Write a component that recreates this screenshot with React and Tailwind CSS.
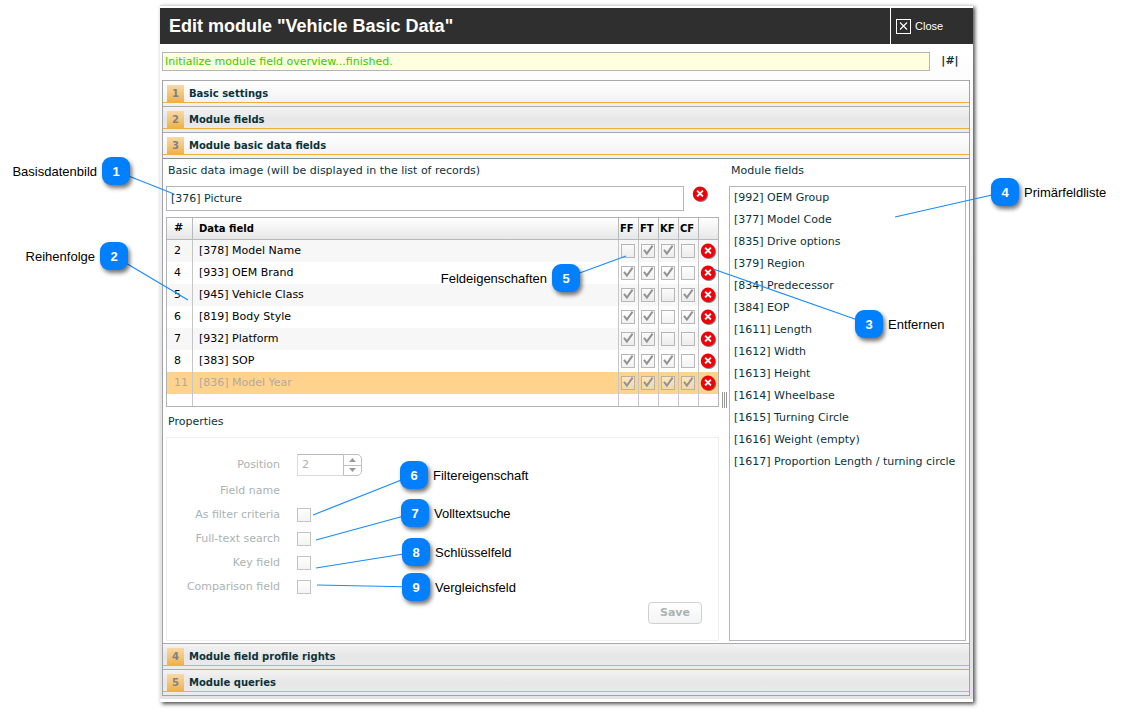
import React, { useState } from 'react';

const dataFields = [
  { position: 2, name: '[378] Model Name', flags: [false, true, true, false] },
  { position: 4, name: '[933] OEM Brand', flags: [true, true, true, false] },
  { position: 5, name: '[945] Vehicle Class', flags: [true, true, false, true] },
  { position: 6, name: '[819] Body Style', flags: [true, true, false, true] },
  { position: 7, name: '[932] Platform', flags: [true, true, false, false] },
  { position: 8, name: '[383] SOP', flags: [true, true, true, false] },
  { position: 11, name: '[836] Model Year', flags: [true, true, true, true], selected: true },
];

const flagNames = ['FF', 'FT', 'KF', 'CF'];

const moduleFields = [
  '[992] OEM Group',
  '[377] Model Code',
  '[835] Drive options',
  '[379] Region',
  '[834] Predecessor',
  '[384] EOP',
  '[1611] Length',
  '[1612] Width',
  '[1613] Height',
  '[1614] Wheelbase',
  '[1615] Turning Circle',
  '[1616] Weight (empty)',
  '[1617] Proportion Length / turning circle',
];

const properties = ['As filter criteria', 'Full-text search', 'Key field', 'Comparison field'];

// x / y are the badge centre, to is the point the line leads to
const callouts = [
  { id: 1, label: 'Basisdatenbild', x: 116, y: 171, to: [174, 194], side: 'left' },
  { id: 2, label: 'Reihenfolge', x: 114, y: 256, to: [188, 300], side: 'left' },
  { id: 3, label: 'Entfernen', x: 869, y: 324, to: [713, 269], side: 'right' },
  { id: 4, label: 'Primärfeldliste', x: 1005, y: 192, to: [895, 217], side: 'right' },
  { id: 5, label: 'Feldeigenschaften', x: 566, y: 278, to: [626, 256], side: 'left' },
  { id: 6, label: 'Filtereigenschaft', x: 414, y: 475, to: [313, 515], side: 'right' },
  { id: 7, label: 'Volltextsuche', x: 415, y: 513, to: [316, 540], side: 'right' },
  { id: 8, label: 'Schlüsselfeld', x: 416, y: 552, to: [316, 568], side: 'right' },
  { id: 9, label: 'Vergleichsfeld', x: 416, y: 587, to: [317, 585], side: 'right' },
];

const SectionHeader = ({ number, title, light }) => (
  <h2 className="border-t border-[#a9abae]">
    <button
      type="button"
      className={`flex h-[25px] w-full flex-col pt-1 text-left ${
        light
          ? 'bg-linear-to-b from-white to-[#f0f0f0]'
          : 'bg-linear-to-b from-[#f3f3f3] via-[#e6e6e6] to-[#ececec]'
      }`}
    >
      <span className="flex h-[18px] w-full items-start border-b border-[#efae3d] pl-1 text-[10px] leading-[18px] font-bold">
        <span className="h-[18px] w-[17px] shrink-0 bg-linear-to-b from-[#f8d9a6] to-[#efae3d] text-center text-[#7b8387]">
          {number}
        </span>
        <span className="ml-[5px] text-[#0b333c]">{title}</span>
      </span>
    </button>
  </h2>
);

const DeleteButton = ({ label }) => (
  <button type="button" aria-label={label} className="block size-4">
    <svg viewBox="0 0 16 16" className="size-4 overflow-visible">
      <circle cx="8.8" cy="8.8" r="7.3" fill="#000" opacity="0.5" />
      <circle cx="8" cy="7.8" r="7.2" fill="#f20008" />
      <path d="M5.1 4.7 10.9 10.5M10.9 4.7 5.1 10.5" stroke="#fff" strokeWidth="1.8" />
    </svg>
  </button>
);

const FlagBox = ({ label, checked }) => (
  <span className="relative ml-[2px] block size-[14px]">
    <input
      type="checkbox"
      aria-label={label}
      defaultChecked={checked}
      disabled
      className="block size-[14px] appearance-none border border-[#a8a8a8]/80 bg-linear-to-b from-white/40 to-[#dcdcdc]/40"
    />
    {checked && (
      <svg viewBox="0 0 14 14" className="pointer-events-none absolute inset-0 size-[14px] overflow-visible">
        <path d="M3 5.8 5.9 9.6 11.6 1.6" fill="none" stroke="#929292" strokeWidth="2" />
      </svg>
    )}
  </span>
);

const Callout = ({ id, label, x, y, side }) => (
  <div
    className="absolute size-7 -translate-x-1/2 -translate-y-1/2 rounded-[9px] bg-[#0080ff] shadow-[2px_3px_4px_rgba(0,0,0,0.55)]"
    style={{ left: x, top: y }}
  >
    <span className="flex h-[30px] w-7 items-center justify-center text-[13px] font-bold text-white">{id}</span>
    <span
      className={`absolute top-0 flex h-[30px] items-center text-[13px] whitespace-nowrap text-black ${
        side === 'left' ? 'right-full mr-[5px]' : 'left-full ml-[5px]'
      }`}
    >
      {label}
    </span>
  </div>
);

const DataFieldTable = () => (
  <table className="mt-[6px] w-full table-fixed border-separate border-spacing-0 border border-[#b3b3b6] text-[11px] text-black">
    <colgroup>
      <col className="w-[26px]" />
      <col />
      <col className="w-5" />
      <col className="w-5" />
      <col className="w-5" />
      <col className="w-5" />
      <col className="w-[19px]" />
    </colgroup>
    <thead>
      <tr className="h-[22px] bg-linear-to-b from-white to-[#e6e6e6] text-left">
        <th className="border-r border-b border-[#b7babc] p-0 pl-[7px]">#</th>
        <th className="border-r border-b border-[#b7babc] p-0 pl-[6px] text-[10px]">Data field</th>
        {flagNames.map((flag) => (
          <th key={flag} className="border-r border-b border-[#b7babc] p-0 pl-px text-[10px]">
            {flag}
          </th>
        ))}
        <th className="border-b border-[#b7babc] p-0" aria-label="Remove"></th>
      </tr>
    </thead>
    <tbody>
      {dataFields.map((field, index) => (
        <tr
          key={field.position}
          className={`h-[22px] ${
            field.selected ? 'bg-[#ffd38c] text-[#b0aaa2]' : index % 2 === 0 ? 'bg-[#f7f7f7]' : 'bg-white'
          }`}
        >
          <td className="border-r border-[#c5c6c8] p-0 pl-[7px]">{field.position}</td>
          <td className="border-r border-[#c5c6c8] p-0 pl-[6px]">{field.name}</td>
          {field.flags.map((checked, i) => (
            <td key={flagNames[i]} className="border-r border-[#c5c6c8] p-0">
              <FlagBox label={`${field.name} ${flagNames[i]}`} checked={checked} />
            </td>
          ))}
          <td className="p-0 pl-px">
            <DeleteButton label={`Remove ${field.name}`} />
          </td>
        </tr>
      ))}
      <tr className="h-3">
        {[0, 1, 2, 3, 4, 5].map((i) => (
          <td key={i} className="border-r border-[#c5c6c8] p-0"></td>
        ))}
        <td className="p-0"></td>
      </tr>
    </tbody>
  </table>
);

const PropertiesForm = () => (
  <form className="border border-[#efefef] pt-4 pr-4 pb-4 text-[11px] text-[#aab3b3]">
    <div className="mb-[3px] flex items-center gap-[17px]">
      <label htmlFor="position" className="w-[113px] text-right">
        Position
      </label>
      <div className="flex h-[22px]">
        <input
          id="position"
          type="text"
          defaultValue="2"
          disabled
          className="w-[46px] border border-r-0 border-[#dcdcdc] border-t-[#b8b8b8] bg-white px-1"
        />
        <div className="flex w-[19px] flex-col rounded-r-[5px] border border-[#bfbfbf]">
          <button
            type="button"
            disabled
            aria-label="Increase"
            className="flex flex-1 items-center justify-center border-b border-[#bfbfbf]"
          >
            <svg viewBox="0 0 7 4" className="h-1 w-[7px]">
              <path d="M0 4 3.5 0 7 4Z" fill="#9a9a9a" />
            </svg>
          </button>
          <button type="button" disabled aria-label="Decrease" className="flex flex-1 items-center justify-center">
            <svg viewBox="0 0 7 4" className="h-1 w-[7px]">
              <path d="M0 0 3.5 4 7 0Z" fill="#9a9a9a" />
            </svg>
          </button>
        </div>
      </div>
    </div>
    <div className="flex h-6 items-center">
      <span className="w-[113px] text-right">Field name</span>
    </div>
    {properties.map((name) => (
      <label key={name} className="flex h-6 items-center gap-[17px]">
        <span className="w-[113px] text-right">{name}</span>
        <input
          type="checkbox"
          disabled
          className="size-[14px] appearance-none border border-[#c4c4c4] bg-linear-to-b from-white to-[#f4f4f4]"
        />
      </label>
    ))}
    <div className="mt-[3px] flex justify-end">
      <button
        type="button"
        disabled
        className="h-[22px] w-[54px] rounded border border-[#cdcfd0] bg-linear-to-b from-white to-[#f4f4f4] font-bold"
      >
        Save
      </button>
    </div>
  </form>
);

const App = () => {
  const [image, setImage] = useState('[376] Picture');

  return (
    <div className="relative bg-white pt-[5px] pr-[149px] pb-2 pl-40 font-['Liberation_Sans',Arial,sans-serif]">
      <div className="border-t border-[#d9d9d9] bg-white pt-[2px] pb-[3px] shadow-[2px_2px_4px_rgba(0,0,0,0.7)]">
        {/* Title bar */}
        <header className="flex h-9 bg-[#2f2f2f] text-white">
          <h1 className="flex flex-1 items-center pl-[9px] text-[18px] font-bold">Edit module "Vehicle Basic Data"</h1>
          <button type="button" className="flex w-[83px] items-center gap-1 border-l border-white pl-[5px] text-[11px]">
            <svg viewBox="0 0 15 15" className="size-[15px]">
              <rect x="0.5" y="0.5" width="14" height="14" fill="none" stroke="#fff" />
              <path d="M4 3.5 11 10.5M11 3.5 4 10.5" stroke="#fff" strokeWidth="1.1" />
            </svg>
            Close
          </button>
        </header>

        <div className="bg-linear-to-b from-white to-[#e4e4e4] to-50% pt-2 pr-[3px] pb-[3px] pl-[2px] font-['DejaVu_Sans',Verdana,sans-serif]">
          {/* Status line */}
          <div className="mb-[9px] flex items-center">
            <div className="h-[19px] flex-1 border border-[#b3b5b8] bg-[#ffffe0] pl-[2px] text-[11px] leading-[17px] text-[#33cc00]">
              Initialize module field overview...finished.
            </div>
            <div className="w-10 text-center text-[11px] font-bold text-[#0b333c]">|#|</div>
          </div>

          <div className="border-x border-b border-[#a0a2a5]">
            <SectionHeader number={1} title="Basic settings" light />
            <SectionHeader number={2} title="Module fields" />
            <SectionHeader number={3} title="Module basic data fields" light />

            <div className="flex border-t border-[#8f9194] bg-white px-[3px] pb-[2px] text-[11px] text-[#0b333c]">
              <div className="min-w-0 flex-1">
                <label htmlFor="image" className="mb-[2px] flex h-[25px] items-center pl-[2px]">
                  Basic data image (will be displayed in the list of records)
                </label>
                <div className="flex items-start">
                  <input
                    id="image"
                    type="text"
                    value={image}
                    onChange={(e) => setImage(e.target.value)}
                    className="h-[25px] min-w-0 flex-1 border border-[#b3b5b8] bg-white px-1 pb-px"
                  />
                  <div className="w-[35px] pl-2">
                    <DeleteButton label="Remove picture" />
                  </div>
                </div>

                <DataFieldTable />

                <h3 className="flex h-[30px] items-center pl-[2px]">Properties</h3>
                <PropertiesForm />
              </div>

              {/* Splitter */}
              <div className="flex w-[10px] items-center justify-center">
                <div className="flex h-4 gap-px">
                  <span className="w-px bg-[#999]"></span>
                  <span className="w-px bg-[#999]"></span>
                  <span className="w-px bg-[#999]"></span>
                </div>
              </div>

              <div className="flex w-[237px] flex-col">
                <h3 className="mb-[2px] flex h-[25px] items-center pl-[2px]">Module fields</h3>
                <ul className="flex-1 border border-[#b3b5b8] pl-1">
                  {moduleFields.map((field) => (
                    <li key={field} className="flex h-[22px] items-center whitespace-nowrap">
                      {field}
                    </li>
                  ))}
                </ul>
              </div>
            </div>

            <SectionHeader number={4} title="Module field profile rights" />
            <SectionHeader number={5} title="Module queries" />
          </div>
        </div>
      </div>

      {/* Annotations */}
      <div className="pointer-events-none absolute inset-0">
        <svg className="absolute inset-0 size-full">
          {callouts.map((c) => (
            <line key={c.id} x1={c.x} y1={c.y} x2={c.to[0]} y2={c.to[1]} stroke="#1a8cff" strokeWidth="1.2" />
          ))}
        </svg>
        {callouts.map((c) => (
          <Callout key={c.id} {...c} />
        ))}
      </div>
    </div>
  );
};

export default App;
